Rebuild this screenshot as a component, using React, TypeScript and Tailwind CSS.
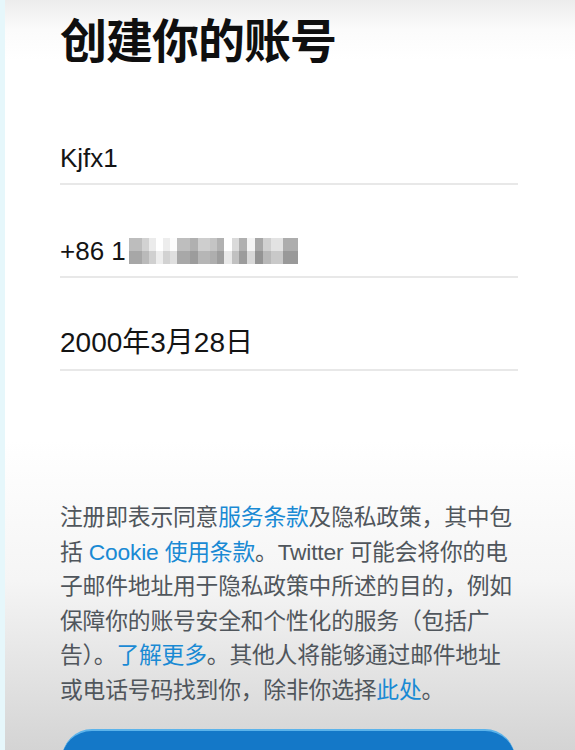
const blocks = [
  { w: 13, c: "#b4b4b4" },
  { w: 7, c: "#c8c8c8" },
  { w: 7, c: "#e0e0e0" },
  { w: 7, c: "#ffffff" },
  { w: 7, c: "#e2e2e2" },
  { w: 7, c: "#f0f0f0" },
  { w: 13, c: "#b5b5b5" },
  { w: 8, c: "#a8a8a8" },
  { w: 12, c: "#c4c4c4" },
  { w: 7, c: "#bbbbbb" },
  { w: 7, c: "#a9a9a9" },
  { w: 8, c: "#fafafa" },
  { w: 7, c: "#d0d0d0" },
  { w: 8, c: "#a8a8a8" },
  { w: 8, c: "#e8e8e8" },
  { w: 8, c: "#9f9f9f" },
  { w: 8, c: "#c6c6c6" },
  { w: 12, c: "#d8d8d8" },
  { w: 15, c: "#a5a5a5" },
];

function Blurred() {
  return (
    <span className="inline-flex h-[26px] items-stretch ml-[3px]">
      {blocks.map((b, i) => (
        <span key={i} className="flex flex-col" style={{ width: b.w }}>
          <span className="flex-1" style={{ background: b.c, filter: "brightness(1.05)" }} />
          <span className="flex-1" style={{ background: b.c, filter: "brightness(0.93)" }} />
        </span>
      ))}
    </span>
  );
}

function Field({ children }: { children: React.ReactNode }) {
  return (
    <div className="h-[93px] flex items-end border-b-2 border-[#e8e8e8] pb-[12px]">
      <div className="text-[26px] text-[#141414] leading-none flex items-center">{children}</div>
    </div>
  );
}

export default function App() {
  const link = "text-[#1a8ad4]";
  return (
    <div
      className="w-[575px] h-[750px] overflow-hidden relative bg-[linear-gradient(to_bottom,#ececec_0px,#fbfbfb_30px,#ffffff_60px,#ffffff_440px,#f5f5f5_580px,#d4d4d4_750px)]"
      style={{ fontFamily: '"Liberation Sans", "Noto Sans CJK SC", sans-serif' }}
    >
      <div className="absolute left-0 top-0 h-full w-[5px] bg-[#e6f7fb]" />

      <div className="pl-[60px] pr-[57px]">
        <h1
          className="pt-[10px] text-[47px] leading-[56px] font-bold text-[#0f0f0f] tracking-[-1px]"
          style={{ fontFamily: '"Noto Sans CJK SC", sans-serif' }}
        >
          创建你的账号
        </h1>

        <div className="mt-[26px]">
          <Field>Kjfx1</Field>
          <Field>
            +86 1<Blurred />
          </Field>
          <Field>
            <span className="text-[28px]">2000年3月28日</span>
          </Field>
        </div>

        <p
          className="mt-[129px] text-[22.8px] leading-[34.6px] text-[#50565c] tracking-[-0.2px]"
          style={{ fontFamily: '"Liberation Sans", "Noto Sans CJK SC", sans-serif' }}
        >
          注册即表示同意<span className={link}>服务条款</span>及隐私政策，其中包括{" "}
          <span className={link}>Cookie 使用条款</span>。Twitter 可能会将你的电子邮件地址用于隐私政策中所述的目的，例如保障你的账号安全和个性化的服务（包括广告）。
          <span className={link}>了解更多</span>。其他人将能够通过邮件地址或电话号码找到你，除非你选择<span className={link}>此处</span>。
        </p>
      </div>

      <div className="absolute left-[62px] top-[729px] w-[453px] h-[60px] rounded-[32px] bg-[#1478c8] border-t-2 border-[#5cb3ea]" />
    </div>
  );
}
